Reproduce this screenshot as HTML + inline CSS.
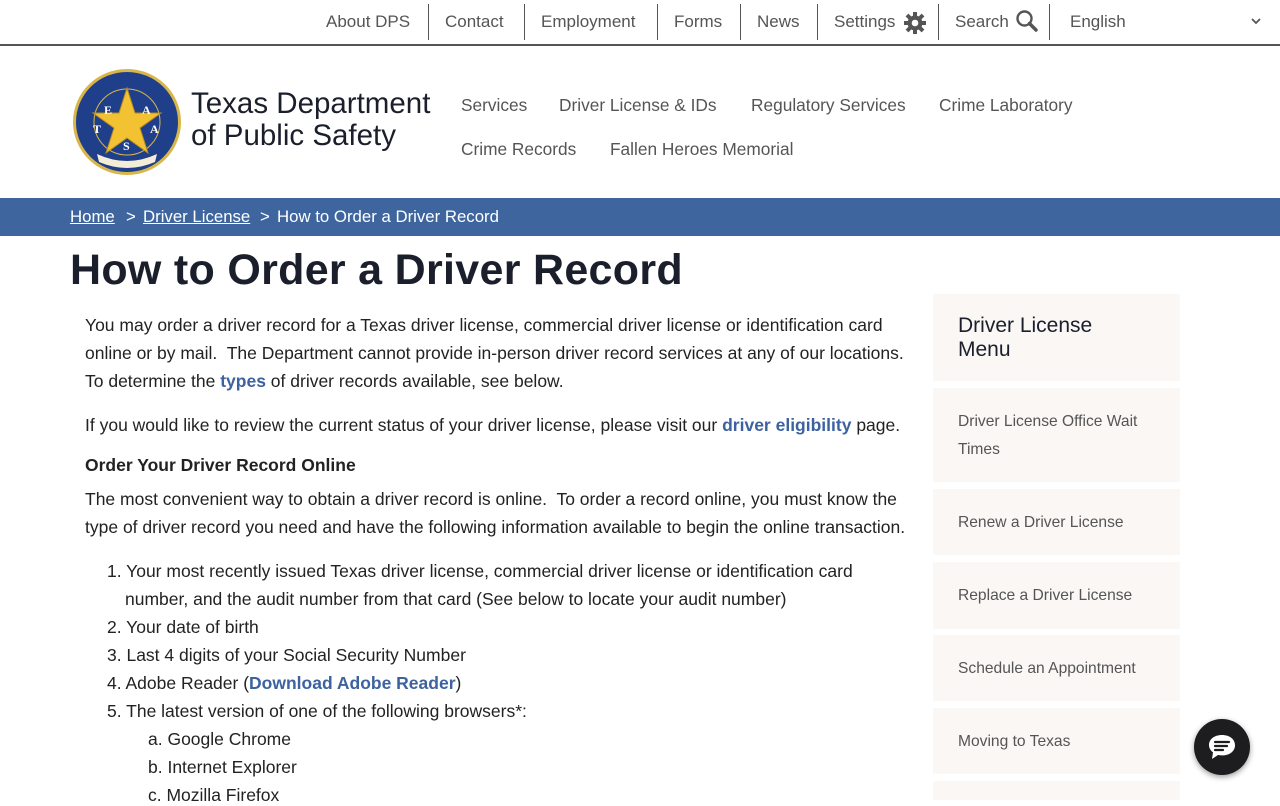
<!DOCTYPE html>
<html><head><meta charset="utf-8"><style>
*{box-sizing:border-box;margin:0;padding:0}
body{width:1280px;height:800px;overflow:hidden;background:#fff;font-family:"Liberation Sans",sans-serif;color:#222;position:relative}
.top{position:absolute;top:0;left:0;width:1280px;height:46px;border-bottom:2px solid #555}
.top span{position:absolute;top:12px;font-size:17px;color:#555}
.sep{position:absolute;top:4px;width:1px;height:36px;background:#555}
.nav{position:absolute;font-size:17.3px;color:#555}
.bc{position:absolute;top:198px;left:0;width:1280px;height:38px;background:#3e659e;color:#fff;font-size:16.8px}
.bc span{position:absolute;top:9px}
.bc u{text-decoration:underline}
h1{position:absolute;left:70px;top:246px;font-size:43px;font-weight:bold;color:#1a1f2b;letter-spacing:0.3px}
.l{position:absolute;left:85px;font-size:17.5px;white-space:nowrap;color:#222;margin-top:1px}
a{color:#3d62a0;font-weight:bold;text-decoration:none}
.box{position:absolute;left:933px;width:247px;background:#faf7f5}
.box span{position:absolute;left:25px;font-size:15.6px;color:#555;line-height:28px;white-space:nowrap}
.chat{position:absolute;left:1194px;top:719px;width:56px;height:56px;border-radius:50%;background:#1d1d1f;box-shadow:0 2px 6px rgba(0,0,0,.4)}
</style></head><body>
<div class="top">
<span style="left:326px">About DPS</span><div class="sep" style="left:428px"></div>
<span style="left:445px">Contact</span><div class="sep" style="left:524px"></div>
<span style="left:541px">Employment</span><div class="sep" style="left:657px"></div>
<span style="left:674px">Forms</span><div class="sep" style="left:740px"></div>
<span style="left:757px">News</span><div class="sep" style="left:817px"></div>
<span style="left:834px">Settings</span>
<svg style="position:absolute;left:903px;top:11px" width="24" height="24" viewBox="0 0 24 24"><g fill="#555"><circle cx="12" cy="12" r="7.5"/><g stroke="#555" stroke-width="4"><line x1="12" y1="1" x2="12" y2="23"/><line x1="1" y1="12" x2="23" y2="12"/><line x1="4" y1="4" x2="20" y2="20"/><line x1="20" y1="4" x2="4" y2="20"/></g></g><circle cx="12" cy="12" r="3.3" fill="#fff"/></svg>
<div class="sep" style="left:938px"></div>
<span style="left:955px">Search</span>
<svg style="position:absolute;left:1015px;top:9px" width="24" height="24" viewBox="0 0 24 24"><circle cx="9.5" cy="9.5" r="7" fill="none" stroke="#555" stroke-width="2.4"/><line x1="14.5" y1="14.5" x2="21" y2="21" stroke="#555" stroke-width="3.5" stroke-linecap="round"/></svg>
<div class="sep" style="left:1049px"></div>
<span style="left:1070px">English</span>
<svg style="position:absolute;left:1251px;top:17px" width="10" height="8" viewBox="0 0 10 8"><path d="M1 2l4 4 4-4" fill="none" stroke="#555" stroke-width="1.8"/></svg>
</div>
<svg style="position:absolute;left:72px;top:68px" width="110" height="108" viewBox="0 0 110 108">
<ellipse cx="55" cy="54" rx="54" ry="53" fill="#d9b64a"/><ellipse cx="55" cy="54" rx="51" ry="50" fill="#1f3f8a"/>
<circle cx="55" cy="54" r="33" fill="#1f3f8a" stroke="#d9b64a" stroke-width="1"/>
<polygon points="55,20 63,45 89,45 68,60 76,85 55,70 34,85 42,60 21,45 47,45" fill="#f2c232" stroke="#b78c1e"/>
<path d="M25 86 Q55 100 85 86 L83 94 Q55 106 27 94Z" fill="#f3ecd7"/>
<text x="32" y="46" fill="#fff" font-size="12" font-family="Liberation Serif" font-weight="bold">E</text>
<text x="70" y="46" fill="#fff" font-size="12" font-family="Liberation Serif" font-weight="bold">A</text>
<text x="21" y="65" fill="#fff" font-size="12" font-family="Liberation Serif" font-weight="bold">T</text>
<text x="78" y="65" fill="#fff" font-size="12" font-family="Liberation Serif" font-weight="bold">A</text>
<text x="51" y="82" fill="#fff" font-size="12" font-family="Liberation Serif" font-weight="bold">S</text>
</svg>
<div style="position:absolute;left:191px;top:88px;font-size:29.5px;line-height:32px;color:#1a1f2b">Texas Department<br>of Public Safety</div>
<div class="nav" style="left:461px;top:95px">Services</div>
<div class="nav" style="left:559px;top:95px">Driver License &amp; IDs</div>
<div class="nav" style="left:751px;top:95px">Regulatory Services</div>
<div class="nav" style="left:939px;top:95px">Crime Laboratory</div>
<div class="nav" style="left:461px;top:139px">Crime Records</div>
<div class="nav" style="left:610px;top:139px">Fallen Heroes Memorial</div>
<div class="bc"><span style="left:70px"><u>Home</u></span><span style="left:126px">&gt;</span><span style="left:143px"><u>Driver License</u></span><span style="left:260px">&gt;</span><span style="left:277px">How to Order a Driver Record</span></div>
<h1>How to Order a Driver Record</h1>
<div class="l" style="top:314px">You may order a driver record for a Texas driver license, commercial driver license or identification card</div>
<div class="l" style="top:342px">online or by mail.&nbsp; The Department cannot provide in-person driver record services at any of our locations.</div>
<div class="l" style="top:370px">To determine the <a>types</a> of driver records available, see below.</div>
<div class="l" style="top:414px">If you would like to review the current status of your driver license, please visit our <a>driver eligibility</a> page.</div>
<div class="l" style="top:454px;font-weight:bold">Order Your Driver Record Online</div>
<div class="l" style="top:488px">The most convenient way to obtain a driver record is online.&nbsp; To order a record online, you must know the</div>
<div class="l" style="top:516px">type of driver record you need and have the following information available to begin the online transaction.</div>
<div class="l" style="top:560px;left:107px">1. Your most recently issued Texas driver license, commercial driver license or identification card</div>
<div class="l" style="top:588px;left:125px">number, and the audit number from that card (See below to locate your audit number)</div>
<div class="l" style="top:616px;left:107px">2. Your date of birth</div>
<div class="l" style="top:644px;left:107px">3. Last 4 digits of your Social Security Number</div>
<div class="l" style="top:672px;left:107px">4. Adobe Reader (<a>Download Adobe Reader</a>)</div>
<div class="l" style="top:700px;left:107px">5. The latest version of one of the following browsers*:</div>
<div class="l" style="top:728px;left:148px">a. Google Chrome</div>
<div class="l" style="top:756px;left:148px">b. Internet Explorer</div>
<div class="l" style="top:784px;left:148px">c. Mozilla Firefox</div>
<div class="box" style="top:294px;height:87px"><span style="top:20px;font-size:21px;line-height:24px;color:#1a1f2b">Driver License<br>Menu</span></div>
<div class="box" style="top:388px;height:94px"><span style="top:20px">Driver License Office Wait<br>Times</span></div>
<div class="box" style="top:489px;height:66px"><span style="top:20px">Renew a Driver License</span></div>
<div class="box" style="top:562px;height:67px"><span style="top:20px">Replace a Driver License</span></div>
<div class="box" style="top:635px;height:66px"><span style="top:20px">Schedule an Appointment</span></div>
<div class="box" style="top:708px;height:66px"><span style="top:20px">Moving to Texas</span></div>
<div class="box" style="top:781px;height:19px"></div>
<div class="chat"><svg style="position:absolute;left:13px;top:14px" width="30" height="28" viewBox="0 0 30 28"><path d="M15 2C7 2 2 6.5 2 12c0 3 1.5 5.5 4 7.3L5 26l6-4c1.3.3 2.6.4 4 .4 8 0 13-4.5 13-10.2S23 2 15 2z" fill="#fff"/><g stroke="#1d1d1f" stroke-width="2.2" stroke-linecap="round"><line x1="8" y1="9" x2="22" y2="9"/><line x1="8" y1="13" x2="20" y2="13"/><line x1="8" y1="17" x2="16" y2="17"/></g></svg></div>
</body></html>
